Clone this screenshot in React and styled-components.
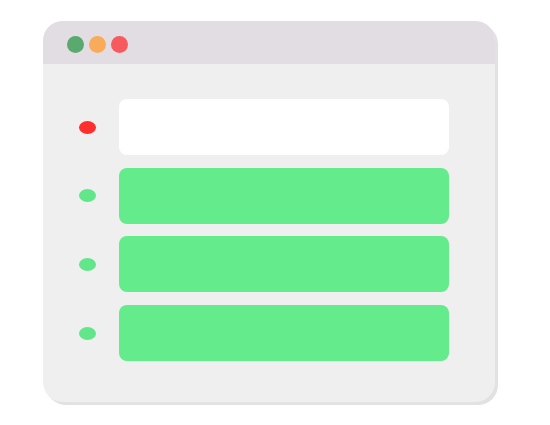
import styled, { createGlobalStyle } from "styled-components";

const Global = createGlobalStyle`
  html, body { margin: 0; padding: 0; background: #ffffff; }
  body { font-family: "Liberation Sans", Arial, sans-serif; }
`;

const Page = styled.div`
  width: 550px;
  height: 425px;
  padding: 21px 0 0 43px;
  box-sizing: border-box;
`;

const Window = styled.div`
  width: 452px;
  height: 381px;
  border-radius: 20px;
  background: #efefef;
  box-shadow: 3px 3px 0 #e4e1e5;
  overflow: hidden;
  display: flex;
  flex-direction: column;
`;

const TitleBar = styled.div`
  height: 43px;
  box-sizing: border-box;
  padding: 3px 0 0 24px;
  background: #e2dde3;
  display: flex;
  align-items: center;
  gap: 5px;
  flex-shrink: 0;
`;

const Light = styled.span`
  width: 17px;
  height: 17px;
  border-radius: 50%;
  background: ${(p) => p.color};
`;

const List = styled.div`
  display: flex;
  flex-direction: column;
  gap: 12.7px;
  padding: 35px 46px 0 36px;
`;

const Row = styled.div`
  display: flex;
  align-items: center;
  gap: 23px;
`;

const Dot = styled.span`
  width: 17px;
  height: 13px;
  border-radius: 50%;
  flex-shrink: 0;
  background: ${(p) => (p.$bad ? "#ff2e2e" : "#62e68a")};
`;

const Bar = styled.div`
  flex: 1;
  height: 56px;
  border-radius: 8px;
  background: ${(p) => (p.$bad ? "#ffffff" : "#64eb8b")};
`;

const rows = [true, false, false, false];

export default function App() {
  return (
    <>
      <Global />
      <Page>
        <Window>
          <TitleBar>
            <Light color="#5aa96f" />
            <Light color="#f8ac5b" />
            <Light color="#f65a5e" />
          </TitleBar>
          <List>
            {rows.map((bad, i) => (
              <Row key={i}>
                <Dot $bad={bad} />
                <Bar $bad={bad} />
              </Row>
            ))}
          </List>
        </Window>
      </Page>
    </>
  );
}
